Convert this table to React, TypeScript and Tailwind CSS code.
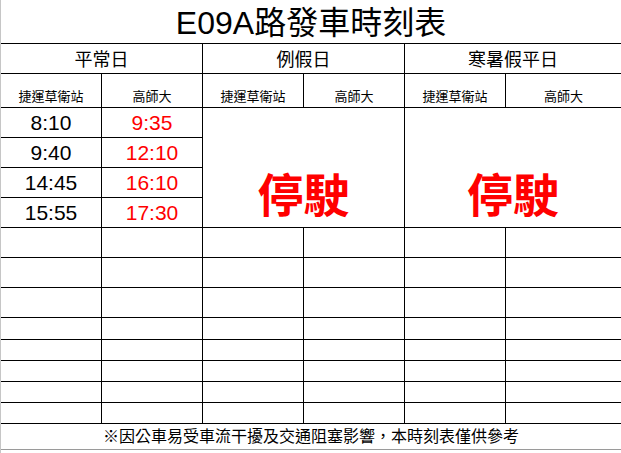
const font = "font-['Liberation_Sans','Noto_Sans_CJK_TC',sans-serif]";

const cell = "border-r border-b border-black";

const weekday: [string, string][] = [
  ["8:10", "9:35"],
  ["9:40", "12:10"],
  ["14:45", "16:10"],
  ["15:55", "17:30"],
];

const stations = ["捷運草衛站", "高師大", "捷運草衛站", "高師大", "捷運草衛站", "高師大"];

const emptyRows = 8;

function App() {
  return (
    <div className={`flex w-[621px] h-[453px] overflow-hidden bg-white text-black ${font}`}>
      <div className="w-px shrink-0 bg-[#c6c6c6]" />
      <div className="grid grow grid-cols-[101px_101px_101px_101px_101px_1fr] grid-rows-[44px_30px_34px_30px_30px_30px_30px_30px_30px_30px_22px_21px_21px_21px_21px_26px] content-start">
        {/* title */}
        <div className="col-span-6 border-b border-black flex items-center justify-center text-[32px] leading-none pt-[2px]">
          E09A路發車時刻表
        </div>

        {/* day types */}
        <div className={`col-span-2 ${cell} flex items-center justify-center text-[18px] leading-none pt-[2px]`}>
          平常日
        </div>
        <div className={`col-span-2 ${cell} flex items-center justify-center text-[18px] leading-none pt-[2px]`}>
          例假日
        </div>
        <div className="col-span-2 border-b border-black flex items-center justify-center text-[18px] leading-none pt-[2px]">
          寒暑假平日
        </div>

        {/* stations */}
        {stations.map((s, i) => (
          <div
            key={i}
            className={`${i === 5 ? "border-b border-black" : cell} flex items-end justify-center pb-[4px] text-[13px] leading-none`}
          >
            {s}
          </div>
        ))}

        {/* weekday times + suspended */}
        {weekday.map(([a, b], i) => (
          <div key={i} className="contents">
            <div className={`col-start-1 ${cell} flex items-center justify-center text-[21px] leading-none`}>
              {a}
            </div>
            <div className={`col-start-2 ${cell} flex items-center justify-center text-[21px] leading-none text-[#ff0000]`}>
              {b}
            </div>
          </div>
        ))}
        <div className={`col-start-3 col-span-2 row-start-4 row-span-4 ${cell} flex items-end justify-center pb-[8px] text-[46px] font-bold leading-none text-[#ff0000]`}>
          停駛
        </div>
        <div className="col-start-5 col-span-2 row-start-4 row-span-4 border-b border-black flex items-end justify-center pb-[8px] text-[46px] font-bold leading-none text-[#ff0000]">
          停駛
        </div>

        {/* empty rows */}
        {Array.from({ length: emptyRows }).map((_, r) =>
          stations.map((_, c) => (
            <div key={`${r}-${c}`} className={c === 5 ? "border-b border-black" : cell} />
          ))
        )}

        {/* note */}
        <div className="col-span-6 border-b border-[#9a9a9a] flex items-center justify-center text-[16px] leading-none">
          ※因公車易受車流干擾及交通阻塞影響，本時刻表僅供參考
        </div>
      </div>
    </div>
  );
}

export default App;
